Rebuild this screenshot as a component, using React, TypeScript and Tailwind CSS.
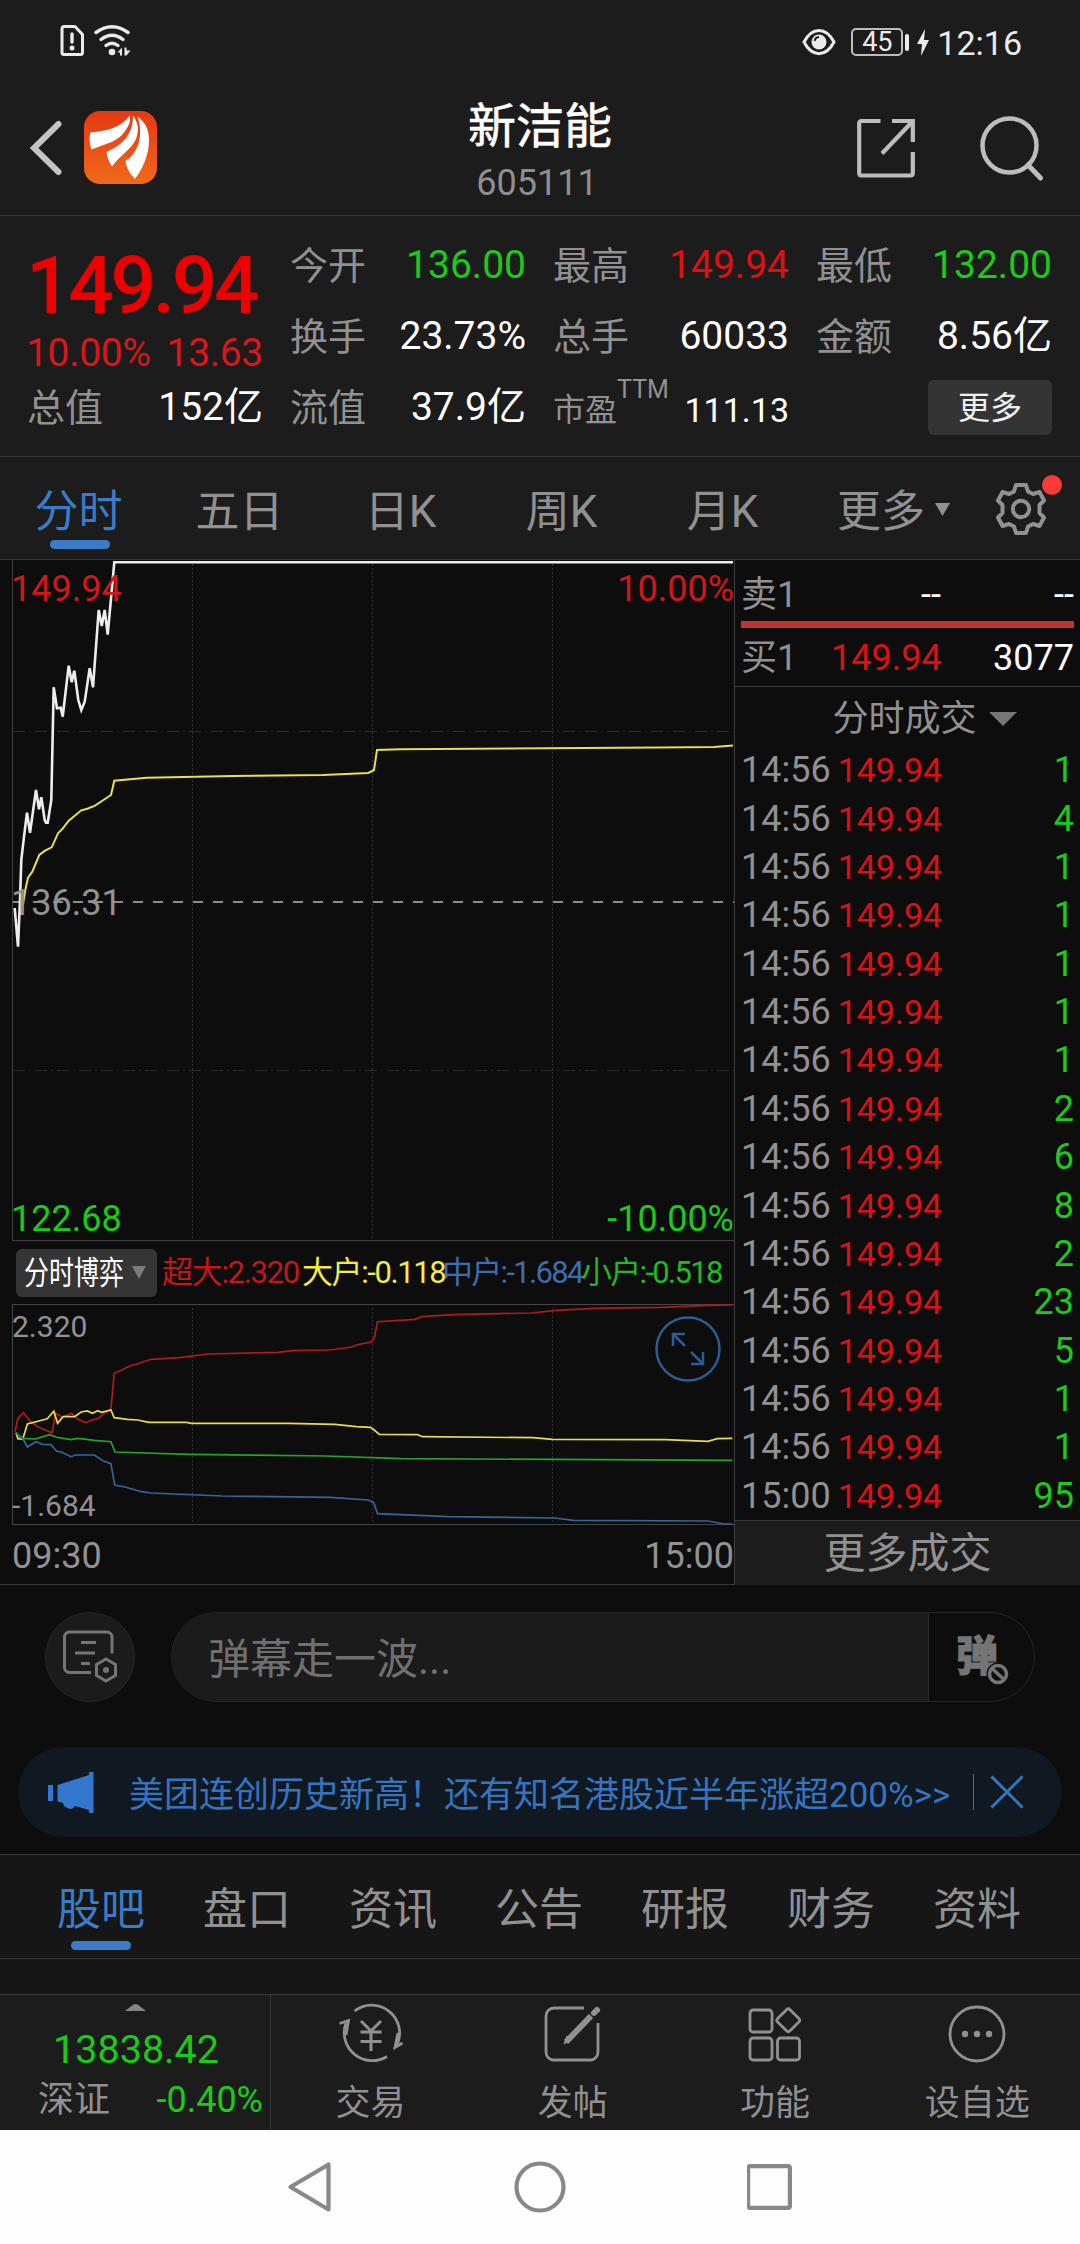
import React from 'react'

type Tone = 'up' | 'down' | 'plain'

interface QuoteItem {
  label: string
  value: string
  tone: Tone
}

const toneClass: Record<Tone, string> = {
  up: 'text-[#de1014]',
  down: 'text-[#1acb1a]',
  plain: 'text-white',
}

const quoteColumns: QuoteItem[][] = [
  [
    { label: '今开', value: '136.00', tone: 'down' },
    { label: '换手', value: '23.73%', tone: 'plain' },
    { label: '流值', value: '37.9亿', tone: 'plain' },
  ],
  [
    { label: '最高', value: '149.94', tone: 'up' },
    { label: '总手', value: '60033', tone: 'plain' },
  ],
  [
    { label: '最低', value: '132.00', tone: 'down' },
    { label: '金额', value: '8.56亿', tone: 'plain' },
  ],
]

const volumes = [1, 4, 1, 1, 1, 1, 1, 2, 6, 8, 2, 23, 5, 1, 1, 95]
const trades = volumes.map((volume, i) => ({
  time: i === volumes.length - 1 ? '15:00' : '14:56',
  price: '149.94',
  volume,
}))

const periodTabs = ['分时', '五日', '日K', '周K', '月K']
const infoTabs = ['股吧', '盘口', '资讯', '公告', '研报', '财务', '资料']

const priceLine =
  '14.7,348 18,386.7 20,340 21.3,300 24,276.7 27,252.7 30,272.7 36,230 39,249.3 41.3,237.3 44.7,260 46,262.7 47.7,262.7 51.3,240 53.7,127.3 57,148.3 60.7,147.7 62.7,156.7 68.7,105.7 71.7,122.3 74.3,110.7 78.3,140 81.3,150 84.7,141.7 89.7,108.3 93,127.3 98.7,50 101.7,66 104.7,50 107.7,74.7 114.3,2.3 733,2.3'
const averageLine =
  '20,355 22.7,346 25.3,330 28,317.7 32.3,311.7 39.3,295 45,290.7 51.7,287.3 58,273.3 62.7,268.7 68.7,260.7 81.3,250.3 87.3,248.7 95,245.7 111,235 114.3,220.7 146.7,217.7 233,216 323,215 368.3,213 374,210 377,190 400,189.3 658,187.5 714,187 733,185.5'

const flowLines = [
  {
    color: '#b01a1e',
    points:
      '15,127.7 18,114.3 23.6,108.7 30.7,117.7 37.8,122.7 52,128.7 55.7,109.3 62.3,113.3 71.7,109.3 77.9,115.3 85.9,118.7 92,116 98.2,114.7 104.8,108.7 110.9,105.3 114.2,69.3 121.8,66 129.8,62 136.9,60 151,55.3 179.3,53.7 207.6,50 278.4,48.3 292.6,46.7 330.3,46 351.6,43 357.2,40.7 371.4,38 374.2,34.3 377.5,17.7 415.3,15.3 421.4,12.7 453,10.7 530.9,9 556.9,6.3 594.6,4.3 660.7,3.3 707.9,1.3 732.4,1',
  },
  {
    color: '#e8dc50',
    points:
      '16,128.7 17.9,134.7 22.7,135.3 27.4,120 37.8,117.3 47.2,114.7 53.8,107.3 57.6,119.3 63.2,112.7 74.6,112.7 81.2,108 87.3,107 92.5,109.3 97.7,106.7 101.5,108.3 110.9,106 114.2,113.7 127.4,115.3 137.8,116 148.7,118.3 186.4,118.3 191.1,119.3 287.9,119.3 335,120.3 356.3,122.7 370.5,123.3 374.2,126 379.4,130.3 417.6,130.7 422.4,132.7 533.3,133.7 552,135.3 665.4,135.7 707.9,137.3 717.3,134.7 732.4,134.3',
  },
  {
    color: '#22a52c',
    points:
      '16,128.7 21.2,134.3 35.4,135 49.6,130.7 56.6,133.3 70.8,135.7 77.9,134.3 94.4,136.3 110.9,137.7 115.1,148 188.8,150.3 325.6,152 401.1,154.7 732.4,156.3',
  },
  {
    color: '#37649e',
    points:
      '17,130 22.7,134.3 27.4,143 35.9,137.7 42.5,140.3 51,140.7 56.6,147.3 61.3,148 70.8,152.7 75.5,151 94.4,151 102.9,156.7 110.9,159.7 114.7,181 125,183 141.6,187.7 151,189 221.8,192 330.3,193.3 368.1,196 373.8,198.7 377.5,209.7 448.3,212.7 554.5,214 573.4,216.3 707.9,217 724.4,220 732.4,220',
  },
]

const StatusBar = () => (
  <div className="h-20 flex items-start justify-between pl-[59px] pr-[58px] text-[#ebebeb]">
    <div className="flex items-center gap-[9px] pt-6">
      <svg width="26" height="33" viewBox="0 0 26 33" fill="none" stroke="currentColor" strokeWidth="3">
        <path d="M5 2.5h11l7.5 8v18a2 2 0 0 1-2 2H5a2 2 0 0 1-2-2v-24a2 2 0 0 1 2-2z" strokeLinejoin="round" />
        <path d="M13 10v8" strokeLinecap="round" strokeWidth="3.4" />
        <circle cx="13" cy="24" r="2.5" fill="currentColor" stroke="none" />
      </svg>
      <svg width="38" height="33" viewBox="0 0 38 33" fill="none" stroke="currentColor" strokeWidth="3.4" strokeLinecap="round">
        <path d="M2 8.500Q18 -3 34 8.500" />
        <path d="M7 15.500Q18 7 29 15.500" />
        <path d="M12 21.500Q18 17 24 21.500" />
        <circle cx="18" cy="28" r="3.300" fill="currentColor" stroke="none" />
        <path d="M23.500 28.500L28 23.500V31.500H26V28.500zM30.500 23.500H32.500V26.500H36.500L32.500 31.500H30.500z" fill="currentColor" stroke="none" />
      </svg>
    </div>
    <div className="flex items-center pt-[23px]">
      <svg className="mr-[15px]" width="34" height="28" viewBox="0 0 34 28">
        <path d="M2 14C10-1.500 24-1.500 32 14C24 29.500 10 29.500 2 14z" fill="none" stroke="currentColor" strokeWidth="3" />
        <circle cx="17" cy="14" r="7.500" fill="currentColor" />
        <path d="M12.500 13a5 5 0 0 1 4.500-4" stroke="#1c1c1c" strokeWidth="1.800" fill="none" />
      </svg>
      <div className="w-[52px] h-[28px] border-2 border-[#bdbdbd] rounded-[5px] flex items-center justify-center text-[27px] leading-none">
        45
      </div>
      <div className="w-1 h-[17px] rounded-sm bg-current ml-[2px]" />
      <svg className="ml-[8px] mr-[8px]" width="12" height="27" viewBox="0 0 12 27" fill="currentColor">
        <path d="M8 0L0 15h5l-1 12L12 11H7z" />
      </svg>
      <span className="text-[34px] leading-9 pt-[2px]">12:16</span>
    </div>
  </div>
)

const AppLogo = () => (
  <svg width="73" height="73" viewBox="0 0 73 73">
    <defs>
      <linearGradient id="logoBg" x1="0" y1="0" x2="0" y2="1">
        <stop offset="0" stopColor="#e63811" />
        <stop offset="1" stopColor="#f06a18" />
      </linearGradient>
    </defs>
    <rect width="73" height="73" rx="16" fill="url(#logoBg)" />
    <g fill="#fff">
      <path d="M6.500 21.500C24 20 38 16 45.500 4.500C47.500 9 45 16 38 24C30 32 18 34 7.500 38.500C5.500 33 5 26 6.500 21.500z" />
      <path d="M49 4.500C54 11 55.500 19 52 28C47 39 37 43 28 55.500C25 51 23 46 22.500 41C33 36 49 28 49 4.500z" />
      <path d="M53.500 5.500C61 11 65 18 65 29C65 44 59 57 51 68C46 63 42.500 57 41.500 50C54 42 60 26 53.500 5.500z" />
    </g>
  </svg>
)

const Header = () => (
  <div className="h-[136px] grid grid-cols-[1fr_auto_1fr] items-center border-b border-[#363636] pl-[30px] pr-[36px]">
    <div className="flex items-center gap-[22px] text-[#c4c4c4]">
      <svg width="32" height="56" viewBox="0 0 32 56" fill="none" stroke="currentColor" strokeWidth="6" strokeLinecap="round">
        <path d="M28.500 4L4 28l24.500 24" />
      </svg>
      <AppLogo />
    </div>
    <div className="flex flex-col items-center gap-[14px] pt-[8px]">
      <div className="text-white text-[48px] leading-none ml-[6px] [-webkit-text-stroke:0.6px_white]">新洁能</div>
      <div className="text-[#8f8f8f] text-[36px] leading-none">605111</div>
    </div>
    <div className="flex items-center justify-end gap-[65px] text-[#bdbdbd]">
      <svg width="58" height="60" viewBox="0 0 58 60" fill="none" stroke="currentColor" strokeWidth="4.200">
        <path d="M23.500 3H4.500Q2.200 3 2.200 5.500V55Q2.200 57.500 4.500 57.500H53.500Q55.800 57.500 55.800 55V34" />
        <path d="M35 3H55.800V24" />
        <path d="M25 35.500L55 4" />
      </svg>
      <svg width="64" height="66" viewBox="0 0 64 66" fill="none" stroke="currentColor" strokeWidth="4.500">
        <circle cx="29.500" cy="30.500" r="27" />
        <path d="M48 50L60.500 63" strokeLinecap="round" strokeWidth="5" />
      </svg>
    </div>
  </div>
)

const QuoteRow: React.FC<QuoteItem> = ({ label, value, tone }) => (
  <div className="h-[71px] flex items-center justify-between leading-none">
    <span className="text-[38px] text-[#919191] -ml-px">{label}</span>
    <span className={`text-[39px] ${toneClass[tone]}`}>{value}</span>
  </div>
)

const QuotePanel = () => (
  <div className="h-[241px] grid grid-cols-4 gap-x-7 px-7 pt-[14px] border-b border-[#363636]">
    <div>
      <div className="h-[109px] flex items-center pt-[2px] -ml-[2px] text-[#ee0000] text-[80px] leading-none font-medium tracking-[-3.200px]">
        149.94
      </div>
      <div className="h-7 mb-[5px] -ml-[2px] flex items-center justify-between text-[#d9161b] text-[39px] leading-none tracking-[-0.3px]">
        <span>10.00%</span>
        <span>13.63</span>
      </div>
      <QuoteRow label="总值" value="152亿" tone="plain" />
    </div>
    {quoteColumns.map((items, i) => (
      <div key={i}>
        {items.map((item) => (
          <QuoteRow key={item.label} {...item} />
        ))}
        {i === 1 && (
          <div className="h-[71px] flex items-center justify-between leading-none text-[#919191]">
            <div className="flex items-start -ml-px">
              <span className="text-[32px] mt-[5px]">市盈</span>
              <span className="text-[25px] -mt-[12px]">TTM</span>
            </div>
            <span className="text-[34px] text-white mt-[4px]">111.13</span>
          </div>
        )}
        {i === 2 && (
          <div className="h-[71px] flex items-center justify-end">
            <button className="w-[124px] h-[55px] rounded-md bg-[#343434] text-[#f0f0f0] text-[32px] leading-none">更多</button>
          </div>
        )}
      </div>
    ))}
  </div>
)

const GearIcon = () => (
  <svg width="52" height="54" viewBox="-26 -27 52 54" fill="none" stroke="currentColor" strokeWidth="4" strokeLinejoin="round">
    <path d="M-5-24H5L7-17.500L12-15L18.500-17L23-8.500L18.500-4V4L23 8.500L18.500 17L12 15L7 17.500L5 24H-5L-7 17.500L-12 15L-18.500 17L-23 8.500L-18.500 4V-4L-23-8.500L-18.500-17L-12-15L-7-17.500z" />
    <circle r="8.200" />
  </svg>
)

const PeriodTabs = () => (
  <div className="h-[103px] flex items-center border-b border-[#363636] text-[#919191] text-[44px] leading-none">
    {periodTabs.map((tab, i) => (
      <div key={tab} className={`relative w-[161px] text-center pt-[7px] pr-[4px] ${i === 0 ? 'text-[#3a7cc8]' : ''}`}>
        {tab}
        {i === 0 && <div className="absolute left-[50px] top-[57px] w-[60px] h-[9px] rounded-full bg-[#3a7cc8]" />}
      </div>
    ))}
    <div className="flex items-center ml-[32px] gap-[10px] pt-[7px]">
      更多
      <svg className="-mt-[4px]" width="15" height="13" viewBox="0 0 15 13" fill="currentColor">
        <path d="M0 0H15L7.500 13z" />
      </svg>
    </div>
    <div className="relative ml-[45px] pt-px">
      <GearIcon />
      <div className="absolute -right-[15px] -top-[6px] w-5 h-5 rounded-full bg-[#fb3a35]" />
    </div>
  </div>
)

const PriceChart = () => (
  <div className="relative h-[681px] text-[36px] leading-none">
    <svg className="block" width="734" height="681" viewBox="0 0 734 681" fill="none">
      <path d="M12.500 0V680.500H734" stroke="#3f3f3f" />
      <path d="M192.500 4V680M372.500 4V680M552.500 4V680" stroke="#333" strokeDasharray="2 2" />
      <path d="M13 171.500H734M13 510.500H734" stroke="#2c2c2c" strokeDasharray="12 4 2 4" />
      <path d="M13 342H734" stroke="#8c8c8c" strokeWidth="2" strokeDasharray="10 10" />
      <polyline points={averageLine} stroke="#e9e04f" strokeWidth="2" />
      <polyline points={priceLine} stroke="#ededed" strokeWidth="2.600" />
    </svg>
    <span className="absolute left-[11px] top-[11px] text-[#cf171c]">149.94</span>
    <span className="absolute right-0 top-[11px] text-[#cf171c]">10.00%</span>
    <span className="absolute left-[11px] top-[325px] text-[#929292]">136.31</span>
    <span className="absolute left-[11px] top-[641px] text-[#1acb1a]">122.68</span>
    <span className="absolute right-0 top-[641px] text-[#1acb1a]">-10.00%</span>
  </div>
)

const FlowLegend = () => (
  <div className="h-[63px] flex items-center pl-4 leading-none">
    <div className="w-[141px] h-12 rounded-md bg-[#353535] flex items-center pl-2 mr-[5px]">
      <span className="w-[100px] shrink-0 text-[32px] text-white whitespace-nowrap">
        <span className="inline-block origin-left scale-x-[0.78]">分时博弈</span>
      </span>
      <svg className="ml-2 shrink-0" width="14" height="13" viewBox="0 0 14 13" fill="#7b7b7b">
        <path d="M0 0H14L7 13z" />
      </svg>
    </div>
    <div className="flex text-[31px] tracking-[-1.700px] whitespace-nowrap">
      <span className="w-[140px] text-[#c4161b] tracking-[-1.300px]">超大:2.320</span>
      <span className="w-[140px] text-[#f3e94c] tracking-[-1.400px]">大户:-0.118</span>
      <span className="w-[139px] text-[#3d6cb0]">中户:-1.684</span>
      <span className="text-[#23b82a]">小户:-0.518</span>
    </div>
  </div>
)

const FlowChart = () => (
  <div className="relative h-[221px] text-[30px] leading-none text-[#929292]">
    <svg className="block" width="734" height="221" viewBox="0 0 734 221" fill="none">
      <path d="M734 .500H12.500V220.500H734" stroke="#474747" />
      <path d="M192.500 4V220M372.500 4V220M552.500 4V220" stroke="#333" strokeDasharray="2 2" />
      {flowLines.map((line) => (
        <polyline key={line.color} points={line.points} stroke={line.color} strokeWidth="1.700" />
      ))}
      <g stroke="#2c5c92" strokeWidth="2.500">
        <circle cx="688" cy="45" r="31.500" />
        <path d="M685 42L673.500 30.500M673 42V30H685M691 48L702.500 59.500M703 48V60H691" />
      </g>
    </svg>
    <span className="absolute left-[12px] top-[8px]">2.320</span>
    <span className="absolute left-[12px] top-[187px]">-1.684</span>
  </div>
)

const TradePanel = () => (
  <div className="flex-1 border-l border-[#3f3f3f] text-[36px] leading-none">
    <div className="h-[127px] border-b border-[#3f3f3f] pl-[6px] pr-[6px] pt-[15px]">
      <div className="grid grid-cols-[90px_110px_1fr] items-center h-10 text-white text-right">
        <span className="text-[#919191] text-left">卖1</span>
        <span>--</span>
        <span>--</span>
      </div>
      <div className="h-[7px] mt-[6px] mb-[10px] bg-[#bf3434]" />
      <div className="grid grid-cols-[90px_109px_1fr] items-center h-10 text-white text-right">
        <span className="text-[#919191] text-left">买1</span>
        <span className="text-[#de1014]">149.94</span>
        <span>3077</span>
      </div>
    </div>
    <div className="h-[59px] flex items-center justify-center gap-3 pt-[4px] pl-[62px] text-[#919191]">
      <span>分时成交</span>
      <svg width="28" height="14" viewBox="0 0 28 14" fill="#76767a">
        <path d="M0 0H28L14 14z" />
      </svg>
      <span className="w-4" />
    </div>
    <div>
      {trades.map((t, i) => (
        <div key={i} className="h-[48.375px] flex items-center pl-[6px] pr-[6px]">
          <span className="text-[#919191]">{t.time}</span>
          <span className="ml-[7px] text-[34px] text-[#de1014]">{t.price}</span>
          <span className="ml-auto text-[#1acb1a]">{t.volume}</span>
        </div>
      ))}
    </div>
    <div className="h-[65px] flex items-center justify-center border-t border-[#363636] bg-[#1c1c1c] text-[#919191] text-[42px] pt-[2px]">
      更多成交
    </div>
  </div>
)

const DanmuBar = () => (
  <div className="flex items-center pl-[45px] pt-[27px]">
    <div className="w-[90px] h-[90px] rounded-full bg-[#1b1b1b] border border-[#262626] flex items-center justify-center">
      <svg width="56" height="54" viewBox="0 0 56 54" fill="none" stroke="#757575" strokeWidth="3">
        <path d="M29 42.500H7.500a5 5 0 0 1-5-5V7a5 5 0 0 1 5-5H45a5 5 0 0 1 5 5V23.500" />
        <path d="M19 12.500H34M13 23H33M19 33.500H28" />
        <path d="M44 29L53.500 34.500V45.500L44 51L34.500 45.500V34.500z" />
        <circle cx="44" cy="40" r="3" fill="#757575" stroke="none" />
      </svg>
    </div>
    <div className="ml-9 w-[864px] h-[90px] rounded-full border border-[#262626] overflow-hidden flex">
      <div className="w-[757px] bg-[#1b1b1b] border-r border-[#2b2b2b] flex items-center pl-[36px] pt-[6px] text-[42px] leading-none text-[#707070]">
        弹幕走一波...
      </div>
      <div className="relative pl-[27px] pt-[23px]">
        <span className="block text-[42px] leading-none font-black text-[#757575] [-webkit-text-stroke:1px_#757575]">弹</span>
        <svg className="absolute left-[57px] top-[49px]" width="24" height="24" viewBox="0 0 24 24" stroke="#757575" strokeWidth="3.500">
          <circle cx="12" cy="12" r="11.500" fill="#0d0d0d" stroke="none" />
          <circle cx="12" cy="12" r="8.500" fill="none" />
          <path d="M6 6.500L18 17.500" />
        </svg>
      </div>
    </div>
  </div>
)

const Banner = () => (
  <div className="pt-[45px] pb-[17px] px-[18px]">
    <div className="h-[90px] rounded-full bg-[#101921] flex items-center pl-[30px] pr-[38px] text-[#3575c0]">
      <svg width="46" height="41" viewBox="0 0 46 41" fill="#3478cd">
        <rect y="13" width="5" height="16" />
        <path d="M9.500 13L41 3V0H45.500V41H41V38L27 34Q24 40 16 34L15 31L9.500 29.500z" />
      </svg>
      <span className="ml-[35px] pt-[6px] text-[35px] leading-none whitespace-nowrap">
        美团连创历史新高！还有知名港股近半年涨超200%&gt;&gt;
      </span>
      <div className="w-px h-9 bg-[#3575c0] ml-auto" />
      <svg className="ml-[16px]" width="34" height="34" viewBox="0 0 34 34" stroke="currentColor" strokeWidth="3" fill="none">
        <path d="M1.500 1.500L32.500 32.500M32.500 1.500L1.500 32.500" />
      </svg>
    </div>
  </div>
)

const InfoTabs = () => (
  <div className="h-[105px] border-y border-[#343434] flex items-center pl-7 text-[44px] leading-none text-[#919191]">
    {infoTabs.map((tab, i) => (
      <div key={tab} className={`relative w-[146px] text-center pt-[6px] ${i === 0 ? 'text-[#3a7cc8]' : ''}`}>
        {tab}
        {i === 0 && <div className="absolute left-[43px] top-[59px] w-[60px] h-[9px] rounded-full bg-[#3a7cc8]" />}
      </div>
    ))}
  </div>
)

const navItems = [
  {
    label: '交易',
    icon: (
      <>
        <path d="M15.500 8A28 28 0 0 1 58 42" />
        <path d="M48 53.500A28 28 0 0 1 7 20" />
        <path d="M.500 20.500L9.500 17.500L7 32M63.500 40L56 44.500L59 30" />
        <path d="M22 18L32 28L42 18M21.500 29H42.500M21.500 38.500H42.500M32 28V48" strokeWidth="3" />
      </>
    ),
  },
  {
    label: '发帖',
    icon: (
      <>
        <path d="M43 5H13a8 8 0 0 0-8 8V49a8 8 0 0 0 8 8H49a8 8 0 0 0 8-8V20" />
        <path d="M50 13L25 39" strokeWidth="6" />
        <path d="M23 41L30 37L26 33z" strokeWidth="1" fill="currentColor" />
        <path d="M53 10L56 7" strokeWidth="6" strokeLinecap="round" />
      </>
    ),
  },
  {
    label: '功能',
    icon: (
      <>
        <rect x="7" y="7" width="22" height="22" rx="3" />
        <rect x="7" y="35" width="22" height="22" rx="3" />
        <rect x="34.500" y="35" width="22" height="22" rx="3" />
        <rect x="36.500" y="8.500" width="17.500" height="17.500" rx="2.500" transform="rotate(45 45.250 17.250)" />
      </>
    ),
  },
  {
    label: '设自选',
    icon: (
      <>
        <circle cx="32" cy="31" r="27" />
        <g fill="currentColor" stroke="none">
          <circle cx="20" cy="31" r="3.200" />
          <circle cx="32" cy="31" r="3.200" />
          <circle cx="44" cy="31" r="3.200" />
        </g>
      </>
    ),
  },
]

const BottomBar = () => (
  <div className="h-[136px] mt-[35px] bg-[#1c1c1c] border-t border-[#3a3a3a] flex leading-none text-[#919191]">
    <div className="w-[271px] border-r border-[#363636] flex flex-col items-center">
      <svg className="mt-[9px]" width="21" height="7" viewBox="0 0 21 7" fill="#858585">
        <path d="M0 7L8 .800Q10.500-.800 13 .800L21 7z" />
      </svg>
      <div className="mt-[19px] ml-[2px] text-[39.500px] text-[#1acb1a]">13838.42</div>
      <div className="w-full flex items-center justify-between pl-[38px] pr-[7px] mt-[12px] text-[36px]">
        <span>深证</span>
        <span className="text-[#1acb1a]">-0.40%</span>
      </div>
    </div>
    {navItems.map((item) => (
      <div key={item.label} className="flex-1 flex flex-col items-center pt-[8px] pr-[3px]">
        <svg width="64" height="62" viewBox="0 0 64 62" fill="none" stroke="currentColor" strokeWidth="2.800" className="overflow-visible">
          {item.icon}
        </svg>
        <span className="text-[35px] mt-[21px]">{item.label}</span>
      </div>
    ))}
  </div>
)

const SystemNav = () => (
  <div className="h-[114px] bg-[#fdfdfd] flex items-center justify-center gap-[181px]">
    <svg className="-ml-px" width="46" height="52" viewBox="0 0 46 52" fill="none" stroke="#888" strokeWidth="4.200" strokeLinejoin="round">
      <path d="M41.500 3.500V48.500L3.500 26z" />
    </svg>
    <svg width="52" height="52" viewBox="0 0 52 52" fill="none" stroke="#888" strokeWidth="4.200">
      <circle cx="26" cy="26" r="23.500" />
    </svg>
    <svg width="46" height="48" viewBox="0 0 46 48" fill="none" stroke="#888" strokeWidth="4.200">
      <rect x="1.100" y="3.100" width="41.800" height="41.800" rx="2" />
    </svg>
  </div>
)

const App: React.FC = () => {
  return (
    <div className="w-[1080px] h-[2244px] overflow-hidden bg-[#161616] font-['Roboto','Noto_Sans_CJK_SC',sans-serif]">
      <div className="bg-[#1c1c1c]">
        <StatusBar />
        <Header />
        <QuotePanel />
        <PeriodTabs />
      </div>
      <div className="bg-[#0d0d0d]">
        <div className="flex h-[1025px] border-b border-[#3a3a3a]">
          <div className="w-[734px]">
            <PriceChart />
            <FlowLegend />
            <FlowChart />
            <div className="flex justify-between pl-[12px] pr-0 pt-[13px] text-[36px] leading-none text-[#929292]">
              <span>09:30</span>
              <span>15:00</span>
            </div>
          </div>
          <TradePanel />
        </div>
        <DanmuBar />
        <Banner />
      </div>
      <InfoTabs />
      <BottomBar />
      <SystemNav />
    </div>
  )
}

export default App
